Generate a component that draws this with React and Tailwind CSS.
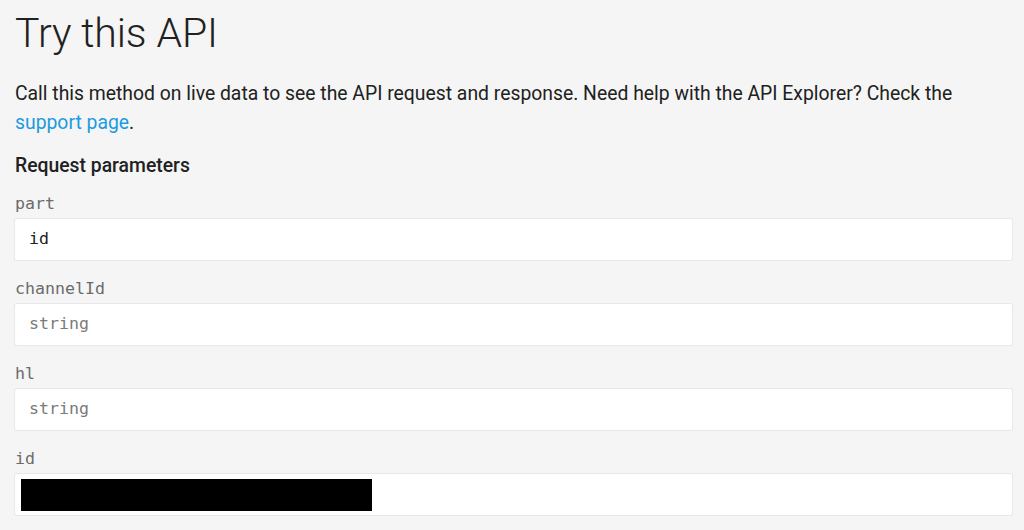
const FIELDS = [
  { name: "part", value: "id" },
  { name: "channelId", placeholder: "string" },
  { name: "hl", placeholder: "string" },
  { name: "id", redacted: true },
];

export default function App() {
  return (
    <div className="min-h-[530px] bg-[#f5f5f5] pl-[15px] pr-[12px] pt-[5px] font-['Roboto',sans-serif] text-[#212121]">
      <h1 className="text-[41px] font-light leading-[56px] tracking-[-0.1px]">Try this API</h1>
      <p className="mt-[18px] text-[19.35px] leading-[29px] text-[#212121]">
        Call this method on live data to see the API request and response. Need help with the API Explorer? Check the{" "}
        <a href="#" className="text-[#1a9be0]">support page</a>.
      </p>
      <h2 className="mt-[15px] text-[19.35px] font-medium leading-[28px]">Request parameters</h2>
      <div className="mt-[13px] flex flex-col">
        {FIELDS.map((f) => (
          <Param key={f.name} field={f} />
        ))}
      </div>
    </div>
  );
}

function Param({ field }) {
  return (
    <div className="mb-[18px] flex flex-col gap-[4px]">
      <label className="font-['DejaVu_Sans_Mono',monospace] text-[16.6px] leading-[22px] text-[#6b6b6b]">
        {field.name}
      </label>
      <div className="flex h-[41px] items-center rounded-[2px] bg-white pl-[14px] pr-[12px] shadow-[0_0_0_1px_#e8e8e8] font-['DejaVu_Sans_Mono',monospace] text-[16.6px]">
        {field.redacted ? (
          <span className="ml-[-8px] block h-[32px] w-[351px] bg-black" />
        ) : field.value ? (
          <span className="text-[#212121]">{field.value}</span>
        ) : (
          <span className="text-[#7a7a7a]">{field.placeholder}</span>
        )}
      </div>
    </div>
  );
}
